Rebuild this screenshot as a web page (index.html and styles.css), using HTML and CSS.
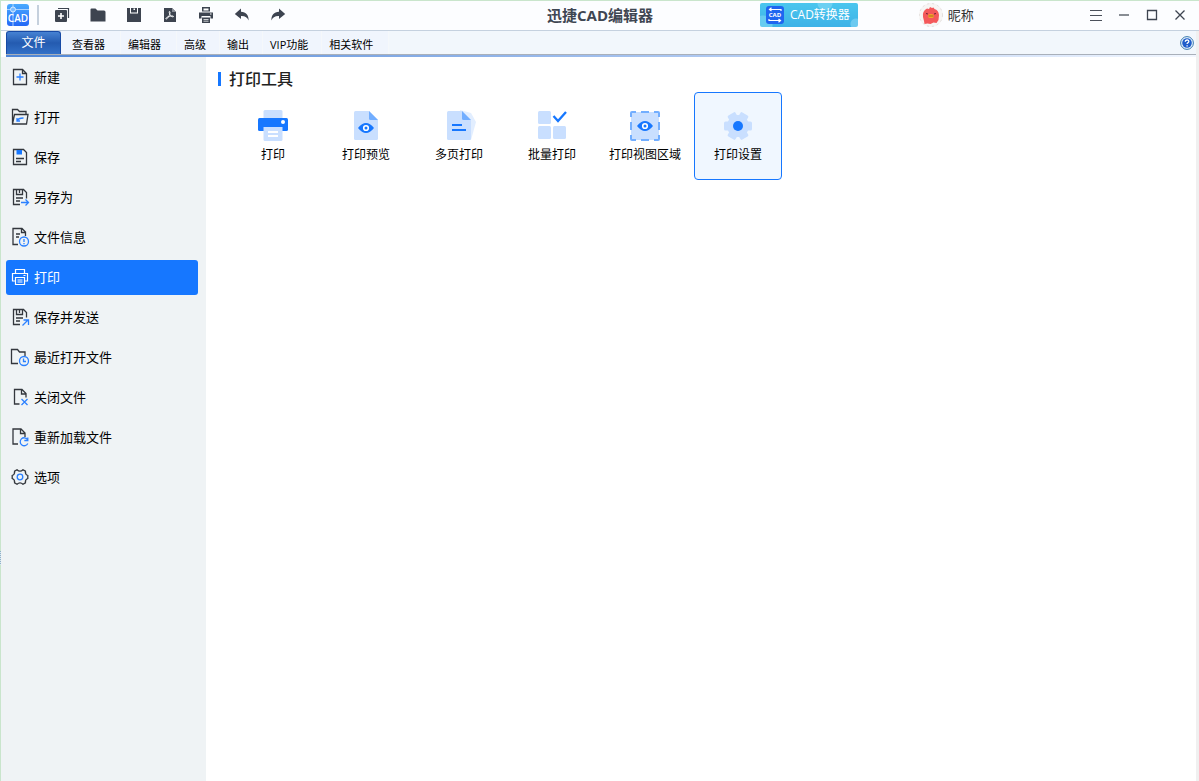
FILE: index.html
```html
<!DOCTYPE html>
<html lang="zh-CN">
<head>
<meta charset="utf-8">
<title>迅捷CAD编辑器</title>
<link rel="stylesheet" href="styles.css">
</head>
<body>
<div class="window">
  <header class="titlebar">
    <div class="title-left">
      <svg class="logo" viewBox="0 0 22 22" aria-hidden="true">
        <defs>
          <linearGradient id="logoFill" x1="0" y1="0" x2="0" y2="1"><stop offset="0" stop-color="#4aaaff"/><stop offset="1" stop-color="#2468f6"/></linearGradient>
        </defs>
        <rect width="22" height="22" rx="3" fill="url(#logoFill)"/>
        <path d="M0 5.500h22M6 0v22" stroke="#a9d2ff" stroke-width="1"/>
        <circle cx="6" cy="5.500" r="2.500" fill="#7dbcff" stroke="#d6eaff"/>
        <text x="11" y="18" class="logo-text">CAD</text>
      </svg>
      <span class="divider"></span>
      <nav class="quick" aria-label="快速访问">
        <button aria-label="新建"><svg viewBox="0 0 16 16"><path d="M4 1.500h10.500V11" fill="none" stroke="#3d4450" stroke-width="1.200"/><rect x="1" y="3" width="12" height="12" rx="1" fill="#3d4450"/><path d="M7 6v6M4 9h6" stroke="#fff" stroke-width="1.600"/></svg></button>
        <button aria-label="打开"><svg viewBox="0 0 16 16"><path d="M.5 2.500q0-1 1-1h4l2 2H14q1.500 0 1.500 1.500v9.500H.5z" fill="#3d4450"/></svg></button>
        <button aria-label="保存"><svg viewBox="0 0 16 16"><path d="M1 1h14v14H1z" fill="#3d4450"/><path d="M4 1v5.500h8V1h-1v4.500H5V1z" fill="#fff"/><path d="M7.500 1.500h1.500v1.500H7.500z" fill="#fff"/></svg></button>
        <button aria-label="导出 PDF"><svg viewBox="0 0 16 16"><path d="M2 1h8l4 4v10H2z" fill="#3d4450"/><path d="M10 1v4h4" fill="#8b9099"/><path d="M7.500 4.500c1 0 .5 2-.3 4-.8 1.800-2 3.500-3 3.500s0-1.600 2-2.300 5-1.200 5.300-.3-2.300.5-3.200-1.200-1.600-3.700-.8-3.700z" fill="none" stroke="#fff" stroke-width=".9"/></svg></button>
        <button aria-label="打印"><svg viewBox="0 0 16 16"><path d="M4 0h8v4.500H4zM1 5.500h14v6h-2.500V9h-9v2.500H1zM4 10.500h8V16H4z" fill="#3d4450"/><path d="M5.500 1.500h5v2h-5zM5.500 12h5v.8h-5zM5.500 13.800h5v.8h-5z" fill="#fff"/><path d="M12 7h1.500" stroke="#fff"/></svg></button>
        <button aria-label="撤销"><svg viewBox="0 0 16 16"><path d="M7 1.500L.8 7 7 12V9c4-.2 6.500 1.500 7.500 4.500C15 8 12 5 7 4.700z" fill="#3d4450"/></svg></button>
        <button aria-label="重做"><svg viewBox="0 0 16 16"><path d="M9 1.500L15.200 7 9 12V9c-4-.2-6.500 1.500-7.500 4.500C1 8 4 5 9 4.700z" fill="#3d4450"/></svg></button>
      </nav>
    </div>
    <h1 class="app-title">迅捷CAD编辑器</h1>
    <div class="title-right">
      <button class="converter">
        <svg class="converter-icon" viewBox="0 0 18 18" aria-hidden="true"><rect width="18" height="18" rx="3" fill="#1f66f0"/><path d="M15 5V3.500H4M5.500 1.800L3.500 3.500l2 1.500M3 13v1.500h11M12.500 13l2 1.500-2 1.700" fill="none" stroke="#fff" stroke-width="1.200"/><text x="9" y="11" class="converter-mark">CAD</text></svg>
        <span>CAD转换器</span>
      </button>
      <button class="user">
        <svg class="avatar" viewBox="0 0 26 26" aria-hidden="true"><circle cx="13" cy="13" r="12" fill="#f7f5f4"/><circle cx="13" cy="13" r="11.500" fill="none" stroke="#e3dfde" stroke-dasharray="2 3"/><path d="M5 15q-1-6 4-8.500l2 .5 1-2 2 1 1.500-.5 1 1.500q4 1 4.500 6l-.5 5-2 3-3-.5-3 1.500-3-.5-3 .5-.5-3z" fill="#f4585a"/><path d="M8 11.500l2 .5M16 12l2-.5" stroke="#6a2430"/><ellipse cx="13" cy="14" rx="3" ry="2" fill="#f6a72a"/><path d="M10.500 14h5" stroke="#8a4a20" stroke-width=".7"/></svg>
        <span>昵称</span>
      </button>
      <div class="window-controls">
        <button aria-label="菜单"><svg viewBox="0 0 14 14"><path d="M1 2.500h12M1 7.500h12M1 12.500h12" stroke="#4b515b" stroke-width="1.200"/></svg></button>
        <button aria-label="最小化"><svg viewBox="0 0 14 14"><path d="M2 7h10" stroke="#7b8088" stroke-width="1.800"/></svg></button>
        <button aria-label="最大化"><svg viewBox="0 0 14 14"><path d="M2.500 2.500h9v9h-9z" fill="none" stroke="#3d4450" stroke-width="1.300"/></svg></button>
        <button aria-label="关闭"><svg viewBox="0 0 14 14"><path d="M2.500 2.500l9 9M11.500 2.500l-9 9" stroke="#3d4450" stroke-width="1.300"/></svg></button>
      </div>
    </div>
  </header>

  <nav class="tabs" aria-label="功能区">
    <button class="tab active">文件</button>
    <button class="tab first">查看器</button>
    <button class="tab">编辑器</button>
    <button class="tab short">高级</button>
    <button class="tab short">输出</button>
    <button class="tab short">VIP功能</button>
    <button class="tab">相关软件</button>
    <button class="help" aria-label="帮助"><svg viewBox="0 0 14 14"><circle cx="7" cy="7" r="6.400" fill="#e6f3fc" stroke="#3b79ae" stroke-width="1"/><circle cx="7" cy="7" r="4.800" fill="#1e5cca"/><path d="M5.300 5.700q0-1.700 1.800-1.700t1.700 1.500q0 .8-1 1.300-.7.400-.7 1.200M7.100 9.200v1.300" fill="none" stroke="#fff" stroke-width="1.300"/></svg></button>
  </nav>

  <div class="body">
    <aside class="sidebar">
      <button class="item"><svg viewBox="0 0 20 20"><path d="M3.500 2.500h9l4 4v11h-13z M12.500 2.500v4h4" class="ink"/><path d="M10 6.500v7M6.500 10h7" class="blue"/></svg>新建</button>
      <button class="item"><svg viewBox="0 0 20 20"><path d="M2.500 17V2.500h5l2 2h6.500v3M2.500 17l2-9.500h13.500l-1.500 9.500z" class="ink"/><path d="M7 14q1-3 6.500-3M7 11v3h3" class="blue"/></svg>打开</button>
      <button class="item"><svg viewBox="0 0 20 20"><path d="M3.500 2.500h10l3 3v12h-13z" class="ink"/><path d="M6.500 3h5.500v4.500H6.500z" fill="#1677ff"/><path d="M6 11.500h8M6 14.500h5" class="ink"/></svg>保存</button>
      <button class="item"><svg viewBox="0 0 20 20"><path d="M10 17.500H3.500v-15h10l3 3v6M6.500 2.500v5h6v-5M9.500 3v3M6 11h7M6 14h4" class="ink"/><path d="M11 15.500h7.500M15.500 12.500l3 3-3 3" class="blue"/></svg>另存为</button>
      <button class="item"><svg viewBox="0 0 20 20"><path d="M8 17.500H3v-16h9l3.500 3.500v4M11.500 2v3.500h4M6 7h4M6 10h3" class="ink"/><circle cx="14" cy="14.500" r="4.500" class="blue"/><path d="M14 12v3M14 16v1.200" class="blue"/></svg>文件信息</button>
      <button class="item active"><svg viewBox="0 0 20 20"><path d="M5.500 6V2.500h9V6M5 14H2.500V6.500h15V14H15M5.500 10.500h9v7h-9zM13.500 8.500h2M7.500 13h5M7.500 15h5" class="light"/></svg>打印</button>
      <button class="item"><svg viewBox="0 0 20 20"><path d="M10 17.500H3.500v-15h10l3 3v5M6.500 2.500v5h6v-5M9.500 3v3M6 11h7M6 14h4" class="ink"/><path d="M12.500 18.500l5.500-5.500M13.500 13h5v5" class="blue"/></svg>保存并发送</button>
      <button class="item"><svg viewBox="0 0 20 20"><path d="M8 16.500H1.500v-14h6l2 2.500h5.500v4" class="ink"/><circle cx="14" cy="14" r="4.500" class="blue"/><path d="M13.500 11.500v3h2.500" class="blue"/></svg>最近打开文件</button>
      <button class="item"><svg viewBox="0 0 20 20"><path d="M9.500 17H4.500v-14.500h7.500l4 4v4M11.500 3v4h4.500" class="ink"/><path d="M11.500 12l6 6M17.500 12l-6 6" class="blue"/></svg>关闭文件</button>
      <button class="item"><svg viewBox="0 0 20 20"><path d="M8 17H3v-15h8l4 4v4M10.500 2.500v4H15" class="ink"/><path d="M17.500 12.500a4 4 0 1 0 .3 4M17.800 10.500v3h-3.500" class="blue"/></svg>重新加载文件</button>
      <button class="item"><svg viewBox="0 0 20 20"><path d="M7 2.800Q8.500 4.200 10 4.200t3-1.400l2.400 1.400Q15 7.500 17.800 8.500v3Q15 12.500 15.400 15.800L13 17.200Q11.500 15.800 10 15.800t-3 1.400L4.600 15.800Q5 12.500 2.200 11.500v-3Q5 7.500 4.600 4.200z" class="ink"/><circle cx="10" cy="10" r="2.800" class="blue"/></svg>选项</button>
    </aside>

    <main class="content">
      <h2 class="section-title">打印工具</h2>
      <div class="tools">
        <button class="tool"><svg viewBox="0 0 32 32"><rect x="6.500" y="0" width="19" height="9" rx="1.500" fill="#c9dfff"/><rect x="1" y="8" width="30" height="13" rx="1.500" fill="#1677ff"/><circle cx="26" cy="12" r="2" fill="#fff"/><path d="M6.500 17h19v12.500q0 1.500-1.500 1.500H8q-1.500 0-1.500-1.500z" fill="#c9dfff"/><path d="M11 22h10M11 26h10" stroke="#fff" stroke-width="1.800"/></svg><span>打印</span></button>
        <button class="tool"><svg viewBox="0 0 32 32"><path d="M5.500 1H19l9 9v18.500q0 1.500-1.500 1.500h-21Q4 30 4 28.500v-26Q4 1 5.500 1z" fill="#c9dfff"/><path d="M19 1v7.500q0 1.500 1.500 1.500H28z" fill="#72aeff"/><path d="M8 18q8-10 16 0-8 10-16 0z" fill="#1677ff"/><circle cx="16" cy="18" r="2.300" fill="none" stroke="#fff" stroke-width="1.600"/></svg><span>打印预览</span></button>
        <button class="tool"><svg viewBox="0 0 32 32"><path d="M17 0l11 3 5 9-5 18h-7z" fill="#e2eeff"/><path d="M5.500 1H19l9 9v18.500q0 1.500-1.500 1.500h-21Q4 30 4 28.500v-26Q4 1 5.500 1z" fill="#c9dfff"/><path d="M19 1v7.500q0 1.500 1.500 1.500H28z" fill="#72aeff"/><path d="M9 15h10M9 20h14" stroke="#1677ff" stroke-width="2"/></svg><span>多页打印</span></button>
        <button class="tool"><svg viewBox="0 0 32 32"><g fill="#c9dfff"><rect x="2" y="1" width="13" height="13" rx="1.500"/><rect x="2" y="16" width="13" height="13" rx="1.500"/><rect x="17" y="16" width="13" height="13" rx="1.500"/></g><path d="M17.500 6l4.500 5 8-9" fill="none" stroke="#1677ff" stroke-width="2.300"/></svg><span>批量打印</span></button>
        <button class="tool"><svg viewBox="0 0 32 32"><rect x="2" y="2" width="28" height="28" rx="1" fill="#c9dfff"/><path d="M2 7V3q0-1 1-1h4M12 2h8M25 2h4q1 0 1 1v4M30 12v8M30 25v4q0 1-1 1h-4M20 30h-8M7 30H3q-1 0-1-1v-4M2 20v-8" fill="none" stroke="#72aeff" stroke-width="2"/><path d="M8 16q8-10 16 0-8 10-16 0z" fill="#1677ff"/><circle cx="16" cy="16" r="2.300" fill="none" stroke="#fff" stroke-width="1.600"/></svg><span>打印视图区域</span></button>
        <button class="tool active"><svg viewBox="0 0 32 32"><circle cx="16" cy="16" r="11" fill="#c9dfff"/><g fill="#c9dfff"><rect x="2" y="11.500" width="28" height="9" rx="1.500"/><rect x="2" y="11.500" width="28" height="9" rx="1.500" transform="rotate(60 16 16)"/><rect x="2" y="11.500" width="28" height="9" rx="1.500" transform="rotate(120 16 16)"/></g><circle cx="16" cy="16" r="5" fill="#1677ff"/></svg><span>打印设置</span></button>
      </div>
    </main>
  </div>
  <span class="edge-grip"></span>
</div>
</body>
</html>
```

FILE: styles.css
```css
* { box-sizing: border-box; }

body {
  margin: 0;
  font-family: "Open Sans", "Noto Sans CJK SC", sans-serif;
  color: #000;
}

button {
  margin: 0;
  padding: 0;
  border: 0;
  background: none;
  color: inherit;
  font: inherit;
}

svg { display: block; flex: none; }

.window {
  position: relative;
  display: flex;
  flex-direction: column;
  min-height: 100vh;
  border-top: 1px solid #c9e5cc;
  border-left: 1px solid #c9e5cc;
  background: #fff;
  box-shadow: inset -3px 0 #f0f0f0;
}

/* Title bar */
.titlebar {
  display: grid;
  grid-template-columns: 1fr auto 1fr;
  align-items: center;
  height: 30px;
  padding-bottom: 1px;
  border-bottom: 1px solid #c5d1df;
  background: #fcfdff;
}

.title-left, .title-right, .quick, .user, .window-controls {
  display: flex;
  align-items: center;
}

.title-left { padding-left: 6px; }
.logo { width: 22px; height: 22px; }
.logo-text { font-size: 10px; font-weight: 600; fill: #fff; text-anchor: middle; }
.divider { width: 2px; height: 20px; margin: 0 15px 0 8px; background: #c5d0dd; }
.quick { gap: 20px; }
.quick svg { width: 16px; height: 16px; }

.app-title {
  margin: 0;
  font-size: 15px;
  line-height: 20px;
  font-weight: 700;
  color: #3f4652;
}

.converter {
  display: flex;
  align-items: center;
  gap: 6px;
  height: 24px;
  margin-left: 107px;
  padding: 0 8px 0 6px;
  border-radius: 2px;
  background:
    radial-gradient(circle at 65px 0, #6bd0f2 7px, transparent 8px),
    radial-gradient(circle at 96px 21px, #6bc9f0 5px, transparent 6px),
    radial-gradient(circle at 3px 22px, #67ccf0 9px, transparent 10px),
    linear-gradient(#4ac6ee, #3eb2e7);
  color: #fff;
  font-size: 12px;
  line-height: 20px;
  white-space: nowrap;
}

.converter-icon { width: 18px; height: 18px; }
.converter-mark { font-size: 6px; font-weight: 700; fill: #fff; text-anchor: middle; }

.user {
  gap: 4px;
  margin-left: 60px;
  font-size: 13px;
  line-height: 20px;
  color: #333;
  white-space: nowrap;
}

.avatar { width: 26px; height: 26px; }
.window-controls { margin-left: auto; padding-right: 5px; }
.window-controls button { padding: 7px; }
.window-controls svg { width: 14px; height: 14px; }

/* Ribbon tabs */
.tabs {
  display: flex;
  height: 26px;
  margin: 0 3px 0 5px;
  border-bottom: 2px solid;
  border-image: linear-gradient(90deg, #4d85d6, #b8cff4 65%, #f2f7ff) 1;
  background: linear-gradient(transparent 23px, #a9b0ba 23px, #a9b0ba 24px, transparent 24px), #f2f7fc;
  font-size: 11px;
  line-height: 20px;
}

.tab {
  height: 23px;
  padding: 4px 15px 0 7px;
  background: #f0f5fd;
  white-space: nowrap;
}

.tab + .tab { border-right: 1px solid #f5f8fb; }
.tab.first { padding-left: 11px; }
.tab.short { padding-right: 13px; }

.tab.active {
  width: 55px;
  padding: 0;
  border: 1px solid #174aa5;
  border-bottom: 0;
  border-radius: 3px 3px 0 0;
  background: linear-gradient(#4682d3, #245bb0 50%, #3371c8);
  color: #fff;
  font-size: 12px;
}

.help { margin-left: auto; padding-right: 2px; }
.help svg { width: 14px; height: 14px; }

/* Page body */
.body { display: flex; flex: 1; margin-right: 3px; }

.sidebar {
  display: flex;
  flex-direction: column;
  gap: 5px;
  width: 205px;
  flex: none;
  padding: 3px 8px 3px 5px;
  background: #eff3f5;
}

.item {
  display: flex;
  align-items: center;
  gap: 4px;
  height: 35px;
  padding: 0 0 2px 4px;
  border-radius: 3px;
  font-size: 13px;
  line-height: 20px;
  text-align: left;
}

.item svg { width: 20px; height: 20px; }
.item.active { background: #1677ff; color: #fff; }
.ink { fill: none; stroke: #33373d; stroke-width: 1.3; }
.blue { fill: none; stroke: #2b80ff; stroke-width: 1.3; }
.light { fill: none; stroke: #fff; stroke-width: 1.2; }

.content { flex: 1; padding: 12px; }

.section-title {
  display: flex;
  align-items: center;
  gap: 8px;
  margin: 0 0 3px;
  font-size: 16px;
  line-height: 20px;
  font-weight: 500;
  color: #222;
}

.section-title::before {
  content: "";
  width: 3px;
  height: 14px;
  background: #1677ff;
}

.tools {
  display: flex;
  flex-wrap: wrap;
  gap: 5px;
  padding-left: 11px;
}

.tool {
  display: flex;
  flex-direction: column;
  align-items: center;
  gap: 3px;
  width: 88px;
  height: 88px;
  padding-top: 17px;
  border: 1px solid transparent;
  border-radius: 4px;
  font-size: 12px;
  line-height: 20px;
  white-space: nowrap;
}

.tool svg { width: 32px; height: 32px; overflow: visible; }
.tool.active { border-color: #1677ff; background: #f0f7ff; }

.edge-grip {
  position: absolute;
  left: -1px;
  top: 550px;
  width: 1px;
  height: 14px;
  background: repeating-linear-gradient(#8fb0c8 0 1px, #d9e8ef 1px 2px);
}
```
